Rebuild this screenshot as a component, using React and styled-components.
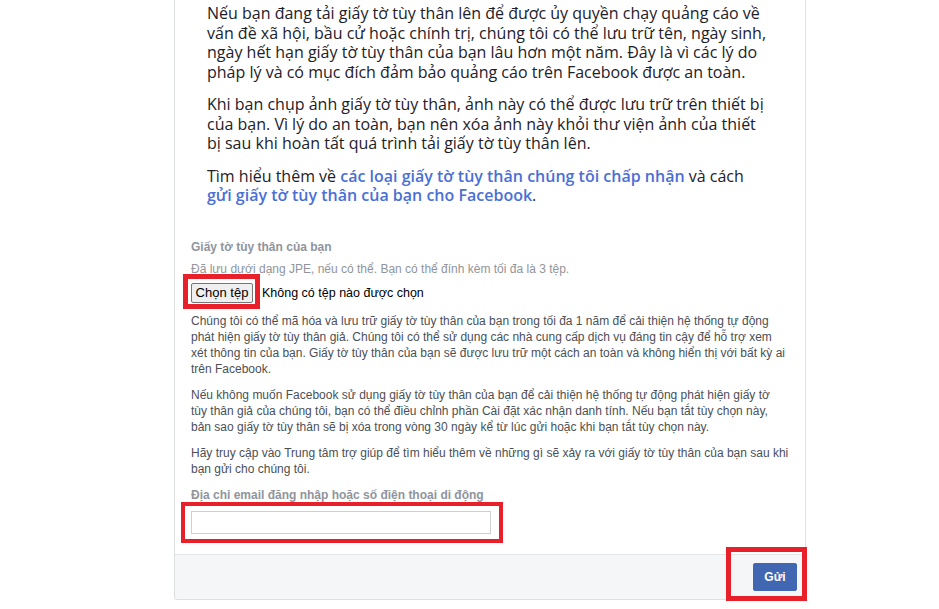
import React from 'react';
import styled, { createGlobalStyle } from 'styled-components';

const GlobalStyle = createGlobalStyle`
  html, body {
    margin: 0;
    padding: 0;
    background: #ffffff;
  }
`;

const Page = styled.div`
  width: 939px;
  min-height: 609px;
  padding-left: 174px;
  box-sizing: border-box;
`;

const Card = styled.div`
  width: 632px;
  box-sizing: border-box;
  border: 1px solid #dddfe2;
  border-top: none;
  border-radius: 0 0 3px 3px;
  background: #ffffff;
`;

const Intro = styled.div`
  padding: 4px 32px 0 32px;
  font-family: "Open Sans", "Noto Sans", sans-serif;
  font-size: 16px;
  line-height: 19.5px;
  color: #1d2129;
`;

const IntroParagraph = styled.p`
  margin: 0 0 13px 0;
`;

const Link = styled.a`
  color: #4a6fd6;
  font-weight: 600;
  text-decoration: none;
`;

const Form = styled.div`
  padding: 20px 16px 20px 16px;
  font-family: "Liberation Sans", Arial, sans-serif;
  font-size: 12px;
  line-height: 16px;
  color: #4b4f56;
`;

const FieldLabel = styled.div`
  font-weight: bold;
  color: #90949c;
  margin-bottom: ${p => p.$gap || 6}px;
`;

const Hint = styled.div`
  color: #90949c;
`;

const Annotated = styled.div`
  position: relative;
  display: inline-flex;
  align-items: center;

  &::after {
    content: '';
    position: absolute;
    top: ${p => p.$t}px;
    left: ${p => p.$l}px;
    right: ${p => p.$r}px;
    bottom: ${p => p.$b}px;
    border: ${p => p.$w || 5}px solid #e8202a;
    pointer-events: none;
  }
`;

const FileRow = styled.div`
  display: flex;
  align-items: center;
  margin: 6px 0 10px 0;
`;

const FileButton = styled.button`
  font-family: "Liberation Sans", Arial, sans-serif;
  font-size: 13px;
  height: 20px;
  width: 62px;
  padding: 0;
  background: #efefef;
  border: 1px solid #767676;
  border-radius: 2px;
  color: #000000;
`;

const FileStatus = styled.span`
  font-family: "Liberation Sans", Arial, sans-serif;
  font-size: 12.5px;
  color: #000000;
  margin-left: 9px;
`;

const Para = styled.p`
  margin: 0 0 10px 0;
`;

const TextInput = styled.input`
  display: block;
  width: 300px;
  height: 23px;
  box-sizing: border-box;
  border: 1px solid #ccd0d5;
  padding: 0 4px;
  font-family: "Liberation Sans", Arial, sans-serif;
  font-size: 12px;
  outline: none;
`;

const Footer = styled.div`
  display: flex;
  justify-content: flex-end;
  padding: 8px;
  background: #f5f6f7;
  border-top: 1px solid #e5e5e5;
  border-radius: 0 0 3px 3px;
`;

const SubmitButton = styled.button`
  font-family: "Liberation Sans", Arial, sans-serif;
  font-size: 12px;
  font-weight: bold;
  color: #ffffff;
  background: #4267b2;
  border: 1px solid #4267b2;
  border-radius: 2px;
  height: 28px;
  width: 44px;
  padding: 0;
`;

export default function App() {
  return (
    <Page>
      <GlobalStyle />
      <Card>
        <Intro>
          <IntroParagraph>
            Nếu bạn đang tải giấy tờ tùy thân lên để được ủy quyền chạy quảng cáo về vấn đề xã hội, bầu cử hoặc chính trị, chúng tôi có thể lưu trữ tên, ngày sinh, ngày hết hạn giấy tờ tùy thân của bạn lâu hơn một năm. Đây là vì các lý do pháp lý và có mục đích đảm bảo quảng cáo trên Facebook được an toàn.
          </IntroParagraph>
          <IntroParagraph>
            Khi bạn chụp ảnh giấy tờ tùy thân, ảnh này có thể được lưu trữ trên thiết bị của bạn. Vì lý do an toàn, bạn nên xóa ảnh này khỏi thư viện ảnh của thiết bị sau khi hoàn tất quá trình tải giấy tờ tùy thân lên.
          </IntroParagraph>
          <IntroParagraph>
            Tìm hiểu thêm về <Link href="#">các loại giấy tờ tùy thân chúng tôi chấp nhận</Link> và cách <br />
            <Link href="#">gửi giấy tờ tùy thân của bạn cho Facebook</Link>.
          </IntroParagraph>
        </Intro>

        <Form>
          <FieldLabel>Giấy tờ tùy thân của bạn</FieldLabel>
          <Hint>Đã lưu dưới dạng JPE, nếu có thể. Bạn có thể đính kèm tối đa là 3 tệp.</Hint>
          <FileRow>
            <Annotated $t={-9} $l={-8} $r={-7} $b={-6}>
              <FileButton type="button">Chọn tệp</FileButton>
            </Annotated>
            <FileStatus>Không có tệp nào được chọn</FileStatus>
          </FileRow>
          <Para>
            Chúng tôi có thể mã hóa và lưu trữ giấy tờ tùy thân của bạn trong tối đa 1 năm để cải thiện hệ thống tự động phát hiện giấy tờ tùy thân giả. Chúng tôi có thể sử dụng các nhà cung cấp dịch vụ đáng tin cậy để hỗ trợ xem xét thông tin của bạn. Giấy tờ tùy thân của bạn sẽ được lưu trữ một cách an toàn và không hiển thị với bất kỳ ai trên Facebook.
          </Para>
          <Para>
            Nếu không muốn Facebook sử dụng giấy tờ tùy thân của bạn để cải thiện hệ thống tự động phát hiện giấy tờ tùy thân giả của chúng tôi, bạn có thể điều chỉnh phần Cài đặt xác nhận danh tính. Nếu bạn tắt tùy chọn này, bản sao giấy tờ tùy thân sẽ bị xóa trong vòng 30 ngày kể từ lúc gửi hoặc khi bạn tắt tùy chọn này.
          </Para>
          <Para>
            Hãy truy cập vào Trung tâm trợ giúp để tìm hiểu thêm về những gì sẽ xảy ra với giấy tờ tùy thân của bạn sau khi bạn gửi cho chúng tôi.
          </Para>
          <FieldLabel $gap={8}>Địa chỉ email đăng nhập hoặc số điện thoại di động</FieldLabel>
          <Annotated $t={-9} $l={-10} $r={-12} $b={-9} $w={4}>
            <TextInput type="text" />
          </Annotated>
        </Form>

        <Footer>
          <Annotated $t={-16} $l={-27} $r={-10} $b={-10}>
            <SubmitButton type="button">Gửi</SubmitButton>
          </Annotated>
        </Footer>
      </Card>
    </Page>
  );
}
